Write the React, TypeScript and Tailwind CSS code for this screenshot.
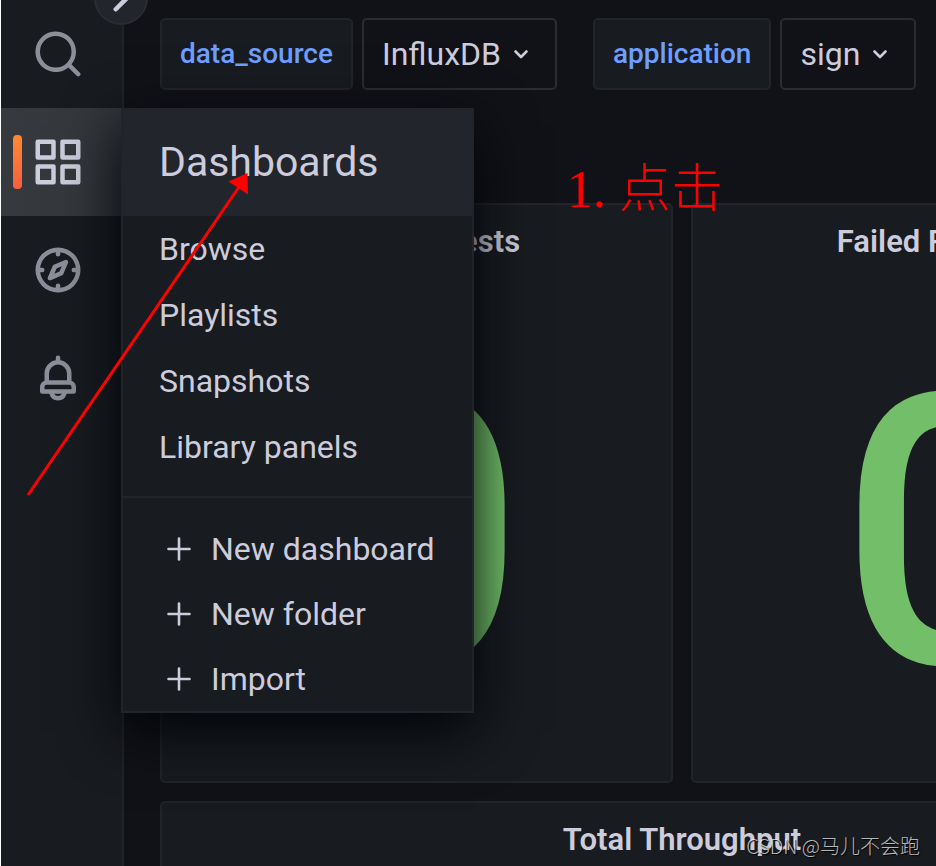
import { useState } from 'react';

const navItems = [
  {
    name: 'Search',
    path: 'M21.71,20.29,18,16.61A9,9,0,1,0,16.61,18l3.68,3.68a1,1,0,0,0,1.42,0A1,1,0,0,0,21.71,20.29ZM11,18a7,7,0,1,1,7-7A7,7,0,0,1,11,18Z',
  },
  {
    name: 'Dashboards',
    path: 'M10,13H3a1,1,0,0,0-1,1v7a1,1,0,0,0,1,1h7a1,1,0,0,0,1-1V14A1,1,0,0,0,10,13ZM9,20H4V15H9ZM21,2H14a1,1,0,0,0-1,1v7a1,1,0,0,0,1,1h7a1,1,0,0,0,1-1V3A1,1,0,0,0,21,2ZM20,9H15V4h5Zm1,4H14a1,1,0,0,0-1,1v7a1,1,0,0,0,1,1h7a1,1,0,0,0,1-1V14A1,1,0,0,0,21,13Zm-1,7H15V15h5ZM10,2H3A1,1,0,0,0,2,3v7a1,1,0,0,0,1,1h7a1,1,0,0,0,1-1V3A1,1,0,0,0,10,2ZM9,9H4V4H9Z',
  },
  {
    name: 'Explore',
    path: 'M12,2A10,10,0,1,0,22,12,10,10,0,0,0,12,2Zm1,17.93V19a1,1,0,0,0-2,0v.93A8,8,0,0,1,4.07,13H5a1,1,0,0,0,0-2H4.07A8,8,0,0,1,11,4.07V5a1,1,0,0,0,2,0V4.07A8,8,0,0,1,19.93,11H19a1,1,0,0,0,0,2h.93A8,8,0,0,1,13,19.93ZM15.14,7.55l-5,2.12a1,1,0,0,0-.52.52l-2.12,5a1,1,0,0,0,.21,1.1,1,1,0,0,0,.7.3.93.93,0,0,0,.4-.09l5-2.12a1,1,0,0,0,.52-.52l2.12-5a1,1,0,0,0-1.31-1.31Zm-2.49,5.1-2.28,1,1-2.28,2.28-1Z',
  },
  {
    name: 'Alerting',
    path: 'M18,13.18V10a6,6,0,0,0-5-5.91V3a1,1,0,0,0-2,0V4.09A6,6,0,0,0,6,10v3.18A3,3,0,0,0,4,16v2a1,1,0,0,0,1,1H8.14a4,4,0,0,0,7.72,0H19a1,1,0,0,0,1-1V16A3,3,0,0,0,18,13.18ZM8,10a4,4,0,0,1,8,0v3H8Zm4,10a2,2,0,0,1-1.72-1h3.44A2,2,0,0,1,12,20Zm6-3H6V16a1,1,0,0,1,1-1H17a1,1,0,0,1,1,1Z',
  },
];

const links = ['Browse', 'Playlists', 'Snapshots', 'Library panels'];
const actions = ['New dashboard', 'New folder', 'Import'];

const variables = [
  { name: 'data_source', options: ['InfluxDB'] },
  { name: 'application', options: ['sign'] },
];

function DashboardsMenu() {
  return (
    <div className="absolute top-0 left-[120px] z-20 w-[353px] border-2 border-[#222429] bg-[#181b1f] text-[32px] text-[#ccccdc] shadow-[0_18px_54px_rgb(1,4,9)]">
      <a href="#dashboards" className="flex h-[106px] items-center bg-[#22252b] px-9 text-[41px]">
        Dashboards
      </a>
      <ul>
        {links.map((link) => (
          <li key={link}>
            <a href="#link" className="flex h-[66px] items-center px-9">{link}</a>
          </li>
        ))}
      </ul>
      <hr className="mt-4 mb-[18px] border-t-2 border-[#222429]" />
      <ul>
        {actions.map((action) => (
          <li key={action}>
            <a href="#action" className="flex h-[65px] items-center gap-5 pl-11">
              <svg viewBox="0 0 24 24" className="size-6" stroke="currentColor" strokeWidth="2.6" strokeLinecap="round">
                <path d="M12 1.500v21M1.500 12h21" />
              </svg>
              {action}
            </a>
          </li>
        ))}
      </ul>
    </div>
  );
}

function Sidebar({ active, onSelect }: { active: string; onSelect: (name: string) => void }) {
  return (
    <aside className="relative z-10 w-[124px] shrink-0 border-r-2 border-l border-l-white border-r-[#222429] bg-[#181b1f]">
      <button
        aria-label="Expand menu"
        className="absolute -top-[29px] left-[93px] z-30 flex size-[54px] items-center justify-center rounded-full border-2 border-[#2a2c32] bg-[#22252b] text-[#ccccdc]"
      >
        <svg viewBox="0 0 24 24" className="size-9" fill="none" stroke="currentColor" strokeWidth="3" strokeLinecap="round" strokeLinejoin="round">
          <path d="M8.5 4.5l7.5 7.5-7.5 7.5" />
        </svg>
      </button>
      <ul>
        {navItems.map((item) => (
          <li key={item.name} className="relative">
            <button
              aria-label={item.name}
              onClick={() => onSelect(item.name)}
              className={`flex h-[108px] w-full items-center pl-[30px] ${
                active === item.name ? 'bg-linear-to-r from-[#36393d] to-[#33363a] text-[#ccccdc]' : 'text-[#8e8e9a]'
              }`}
            >
              <svg viewBox="0 0 24 24" className="size-[54px]" fill="currentColor">
                <path d={item.path} />
              </svg>
            </button>
            {active === item.name && (
              <span className="absolute top-[27px] left-3 h-[54px] w-[9px] rounded-sm bg-linear-to-b from-[#ff8833] to-[#f55f3e]" />
            )}
            {active === 'Dashboards' && item.name === 'Dashboards' && <DashboardsMenu />}
          </li>
        ))}
      </ul>
    </aside>
  );
}

function Variable({ name, options }: { name: string; options: string[] }) {
  return (
    <div className="flex shrink-0 gap-[9px]">
      <label
        htmlFor={name}
        className="flex h-[72px] items-center rounded-[5px] border-2 border-[#222429] bg-[#181b1f] px-[18px] text-[28px] font-medium text-[#6e9fff]"
      >
        {name}
      </label>
      <div className="relative">
        <select
          id={name}
          className="h-[72px] appearance-none rounded-[5px] border-2 border-[#2a2c31] bg-[#111217] pr-[54px] pl-[18px] text-[32px] text-[#ccccdc]"
        >
          {options.map((option) => (
            <option key={option}>{option}</option>
          ))}
        </select>
        <svg
          viewBox="0 0 16 16"
          className="pointer-events-none absolute top-7 right-7 size-4 text-[#ccccdc]"
          fill="none"
          stroke="currentColor"
          strokeWidth="2.6"
          strokeLinecap="round"
          strokeLinejoin="round"
        >
          <path d="M2.5 5.5l5.5 5.5 5.5-5.5" />
        </svg>
      </div>
    </div>
  );
}

function StatPanel({ title, value }: { title: string; value: number }) {
  return (
    <section className="flex h-[580px] flex-col rounded-[5px] border-2 border-[#222429] bg-[#181b1f]">
      <h2 className="flex h-[74px] items-center justify-center text-[31px] font-semibold text-[#ccccdc]">{title}</h2>
      <div className="flex flex-1 items-center justify-center pt-2 text-[378px] leading-none font-medium text-[#73bf69]">
        {value}
      </div>
    </section>
  );
}

export default function App() {
  const [active, setActive] = useState('Dashboards');

  return (
    <div className="relative flex h-screen overflow-hidden bg-[#111217] font-[Roboto,sans-serif]">
      <Sidebar active={active} onSelect={setActive} />

      <main className="min-w-0 flex-1 overflow-hidden pt-[18px] pl-9">
        <div className="flex gap-9">
          {variables.map((v) => (
            <Variable key={v.name} {...v} />
          ))}
        </div>

        <div className="mt-[113px] grid min-w-[1044px] grid-cols-2 gap-[18px]">
          <StatPanel title="Total Requests" value={0} />
          <StatPanel title="Failed Requests" value={0} />
          <section className="col-span-2 h-[580px] rounded-[5px] border-2 border-[#222429] bg-[#181b1f]">
            <h2 className="flex h-[74px] items-center justify-center text-[31px] font-semibold text-[#ccccdc]">
              Total Throughput
            </h2>
          </section>
        </div>
      </main>

      {/* step marker: arrow and caption drawn over the dashboard */}
      <svg viewBox="0 0 224 326" className="pointer-events-none absolute top-[171px] left-[26px] z-30 w-[224px]">
        <path d="M2 324L213 16" stroke="#ff0000" strokeWidth="3" />
        <path d="M221.500 2L202.500 10.500L222 23.500z" fill="#ff0000" />
      </svg>
      <p className="absolute top-[151px] left-[567px] z-30 font-['Liberation_Serif','Noto_Sans_CJK_SC',serif] text-[52px] font-light text-[#ff0000]">
        1. 点击
      </p>

      <p className="absolute right-4 bottom-1 z-30 font-['Noto_Sans_CJK_SC',sans-serif] text-[20px] leading-8 font-light text-white/70 [text-shadow:1px_1px_1px_black]">
        CSDN @马儿不会跑
      </p>
    </div>
  );
}
